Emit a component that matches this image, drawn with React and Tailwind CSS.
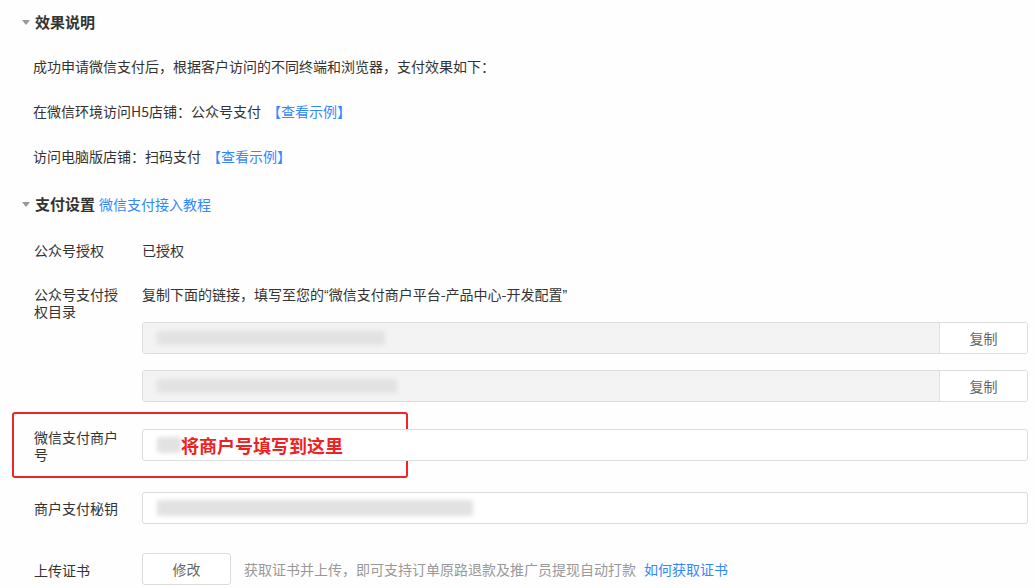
import React from "react";

const font = { fontFamily: '"Noto Sans CJK SC", "Noto Sans", sans-serif' };

function Tri() {
  return (
    <span className="inline-block w-0 h-0 border-l-[4px] border-r-[4px] border-t-[5px] border-l-transparent border-r-transparent border-t-[#999] mr-[5px] ml-[-12px] mt-[1px]" />
  );
}

function Blur({ w, className = "" }) {
  return <div className={`h-[14px] bg-[#e2e2e2] blur-[2px] rounded-[2px] ${className}`} style={{ width: w }} />;
}

function CopyInput({ blur }) {
  return (
    <div className="flex h-[32px] border border-[#dcdcdc] rounded-[3px] overflow-hidden">
      <div className="flex-1 bg-[#f3f3f3] flex items-center pl-[14px]">
        <Blur w={blur} />
      </div>
      <button className="w-[88px] border-l border-[#e0e0e0] bg-white text-[14px] text-[#666]">复制</button>
    </div>
  );
}

export default function App() {
  return (
    <div className="w-[1034px] h-[588px] overflow-hidden bg-[#fefefe] text-[#333] text-[14px] pl-[34px] pr-[6px]" style={font}>
      <div className="h-[44px] flex items-center font-bold text-[15px] text-[#333]">
        <Tri />效果说明
      </div>
      <div className="h-[45px] flex items-center -ml-px">成功申请微信支付后，根据客户访问的不同终端和浏览器，支付效果如下：</div>
      <div className="h-[45px] flex items-center -ml-px">
        在微信环境访问H5店铺：公众号支付<span className="text-[#3388ff] ml-[6px]">【查看示例】</span>
      </div>
      <div className="h-[45px] flex items-center -ml-px">
        访问电脑版店铺：扫码支付<span className="text-[#3388ff] ml-[6px]">【查看示例】</span>
      </div>
      <div className="h-[50px] flex items-center">
        <Tri /><span className="font-bold text-[15px]">支付设置</span>
        <span className="text-[#3388ff] ml-[4px] text-[14px]">微信支付接入教程</span>
      </div>

      <div className="h-[42px] flex items-center">
        <div className="w-[108px] shrink-0">公众号授权</div>
        <div>已授权</div>
      </div>

      <div className="flex pt-[15px]">
        <div className="w-[108px] shrink-0 pr-[18px] leading-[17px]">公众号支付授权目录</div>
        <div className="flex-1">
          <div className="leading-[17px]">
            复制下面的链接，填写至您的<span style={{ fontFamily: '"Liberation Sans", sans-serif' }}>“</span>微信支付商户平台-产品中心-开发配置<span style={{ fontFamily: '"Liberation Sans", sans-serif' }}>”</span>
          </div>
          <div className="mt-[18px]"><CopyInput blur={228} /></div>
          <div className="mt-[16px]"><CopyInput blur={240} /></div>
        </div>
      </div>

      <div className="relative flex mt-[27px]">
        <div className="absolute left-[-22px] top-[-17px] w-[396px] h-[66px] border-2 border-[#f42424] rounded-[3px] pointer-events-none" />
        <div className="w-[108px] shrink-0 pr-[18px] leading-[17px]">微信支付商户号</div>
        <div className="relative flex-1 h-[32px] border border-[#dcdcdc] rounded-[3px] bg-white flex items-center pl-[14px]">
          <Blur w={24} className="h-[16px]" />
          <span className="absolute left-[38px] top-[3px] text-[18px] font-bold text-[#ee2222] leading-[24px]">将商户号填写到这里</span>
        </div>
      </div>

      <div className="flex items-center mt-[29px]">
        <div className="w-[108px] shrink-0">商户支付秘钥</div>
        <div className="flex-1 h-[32px] border border-[#dcdcdc] rounded-[3px] bg-white flex items-center pl-[14px]">
          <Blur w={316} className="h-[16px] bg-[#dedede]" />
        </div>
      </div>

      <div className="flex items-center mt-[29px]">
        <div className="w-[108px] shrink-0 pt-[2px]">上传证书</div>
        <button className="w-[89px] h-[32px] border border-[#dcdcdc] rounded-[3px] bg-white text-[#666] text-[14px]">修改</button>
        <span className="ml-[13px] text-[#999]">获取证书并上传，即可支持订单原路退款及推广员提现自动打款</span>
        <span className="ml-[8px] text-[#3388ff]">如何获取证书</span>
      </div>
    </div>
  );
}
